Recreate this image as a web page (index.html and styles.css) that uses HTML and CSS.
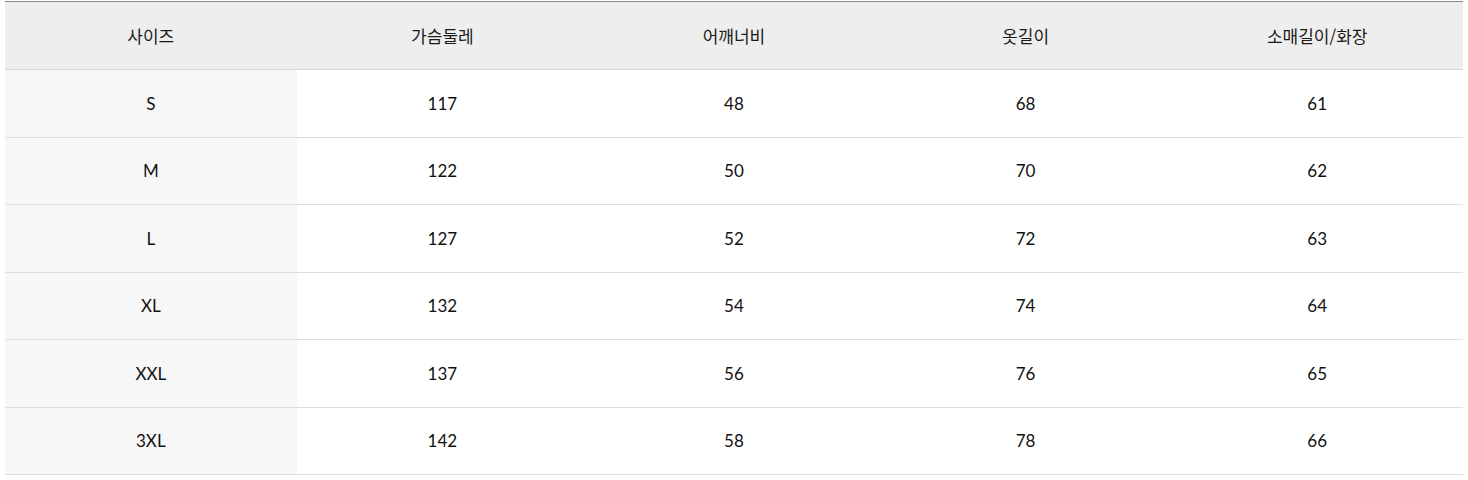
FILE: index.html
```html
<!DOCTYPE html>
<html lang="ko">
<head>
<meta charset="utf-8">
<link rel="stylesheet" href="styles.css">
</head>
<body>
<div class="wrap">
  <table class="size-table">
    <thead>
      <tr><th>사이즈</th><th>가슴둘레</th><th>어깨너비</th><th>옷길이</th><th>소매길이/화장</th></tr>
    </thead>
    <tbody>
      <tr><td class="size">S</td><td>117</td><td>48</td><td>68</td><td>61</td></tr>
      <tr><td class="size">M</td><td>122</td><td>50</td><td>70</td><td>62</td></tr>
      <tr><td class="size">L</td><td>127</td><td>52</td><td>72</td><td>63</td></tr>
      <tr><td class="size">XL</td><td>132</td><td>54</td><td>74</td><td>64</td></tr>
      <tr><td class="size">XXL</td><td>137</td><td>56</td><td>76</td><td>65</td></tr>
      <tr><td class="size">3XL</td><td>142</td><td>58</td><td>78</td><td>66</td></tr>
    </tbody>
  </table>
</div>
</body>
</html>
```
FILE: styles.css
```css
html, body {
  margin: 0;
  background: #fff;
}
.wrap {
  padding: 1px 5px 0 5px;
}
.size-table {
  width: 100%;
  border-collapse: collapse;
  table-layout: fixed;
  font-family: Lato, "Noto Sans CJK KR", sans-serif;
  font-size: 17px;
  color: #111;
}
.size-table thead tr {
  border-top: 1px solid #8a8a8a;
}
.size-table th {
  background: #eeeeee;
  font-weight: normal;
  height: 67px;
  padding: 0;
  text-align: center;
  vertical-align: middle;
  border-bottom: 1px solid #d8d8d8;
  font-family: "Noto Sans CJK KR", sans-serif;
  font-size: 17px;
  color: #1a1a1a;
}
.size-table td {
  height: 66.5px;
  padding: 0;
  text-align: center;
  vertical-align: middle;
  border-bottom: 1px solid #dddddd;
  font-weight: normal;
}
.size-table td.size {
  background: #f7f7f7;
}
```
